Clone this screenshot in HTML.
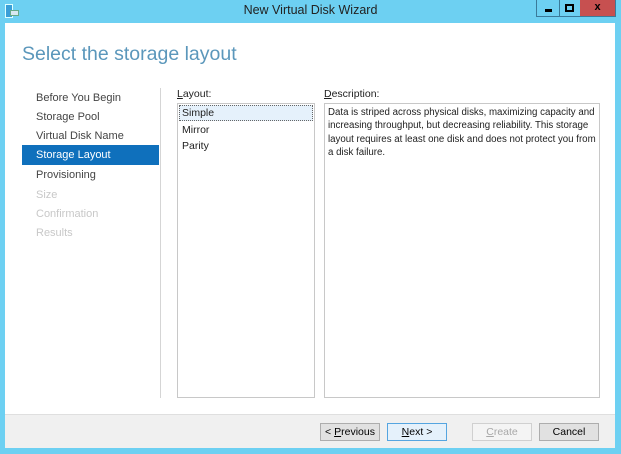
<!DOCTYPE html>
<html><head><style>
*{margin:0;padding:0;box-sizing:border-box}
body{width:621px;height:454px;background:#6dd0f2;font-family:"Liberation Sans",sans-serif;position:relative;overflow:hidden;font-size:11px;color:#1e1e1e}
.a{position:absolute}
.nav{left:36px;font-size:11px;color:#444}
.btn{position:absolute;top:423px;height:18px;border:1px solid #adadad;background:#e1e1e1;font-size:10.5px;text-align:center;line-height:16px;color:#000}
</style></head><body>
<div class="a" style="left:5px;top:4px;width:8px;height:14px;background:#3a9fd8;border:1px solid #dff"></div>
<div class="a" style="left:10px;top:10px;width:9px;height:6px;background:#d8e8f0;border:1px solid #6a8"></div>
<div class="a" style="left:0;top:3px;width:621px;text-align:center;font-size:12.5px;color:#222">New Virtual Disk Wizard</div>
<div class="a" style="left:536px;top:0;width:24px;height:17px;border:1px solid #3a7a9a;border-top:none"><div class="a" style="left:8px;top:9px;width:7px;height:3px;background:#000"></div></div>
<div class="a" style="left:559px;top:0;width:22px;height:17px;border:1px solid #3a7a9a;border-top:none;border-left:none"><div class="a" style="left:6px;top:4px;width:9px;height:8px;border:2px solid #000"></div></div>
<div class="a" style="left:580px;top:0;width:36px;height:17px;background:#c75050;border:1px solid #3a7a9a;border-top:none;border-left:none;color:#000;text-align:center;font-weight:bold;font-size:11px;line-height:15px">x</div>
<div class="a" style="left:5px;top:23px;width:610px;height:425px;background:#fff"></div>
<div class="a" style="left:5px;top:414px;width:610px;height:34px;background:#f0f0f0;border-top:1px solid #dfdfdf"></div>
<div class="a" style="left:22px;top:43px;font-size:19.5px;color:#5b97bb;font-weight:300">Select the storage layout</div>
<div class="a nav" style="top:92px">Before You Begin</div>
<div class="a nav" style="top:111px">Storage Pool</div>
<div class="a nav" style="top:130px">Virtual Disk Name</div>
<div class="a" style="left:22px;top:145px;width:137px;height:20px;background:#0f70bc"></div>
<div class="a nav" style="top:149px;color:#fff">Storage Layout</div>
<div class="a nav" style="top:169px">Provisioning</div>
<div class="a nav" style="top:189px;color:#c8c8c8">Size</div>
<div class="a nav" style="top:208px;color:#c8c8c8">Confirmation</div>
<div class="a nav" style="top:227px;color:#c8c8c8">Results</div>
<div class="a" style="left:160px;top:88px;width:1px;height:310px;background:#d5d5d5"></div>
<div class="a" style="left:177px;top:88px;font-size:10.5px"><u>L</u>ayout:</div>
<div class="a" style="left:177px;top:103px;width:138px;height:295px;border:1px solid #c8c8c8"></div>
<div class="a" style="left:179px;top:105px;width:134px;height:16px;background:#e5f1fb;border:1px dotted #666"></div>
<div class="a" style="left:182px;top:107px;font-size:10.5px">Simple</div>
<div class="a" style="left:182px;top:124px;font-size:10.5px">Mirror</div>
<div class="a" style="left:182px;top:140px;font-size:10.5px">Parity</div>
<div class="a" style="left:324px;top:88px;font-size:10.5px"><u>D</u>escription:</div>
<div class="a" style="left:324px;top:103px;width:276px;height:295px;border:1px solid #c8c8c8;padding:2px 3px;font-size:9.7px;line-height:13.3px">Data is striped across physical disks, maximizing capacity and increasing throughput, but decreasing reliability. This storage layout requires at least one disk and does not protect you from a disk failure.</div>
<div class="btn" style="left:320px;width:60px">&lt; <u>P</u>revious</div>
<div class="btn" style="left:387px;width:60px;border-color:#55a5e0;background:#e5f1fb"><u>N</u>ext &gt;</div>
<div class="btn" style="left:472px;width:60px;background:#f4f4f4;border-color:#d0d0d0;color:#a8a8a8"><u>C</u>reate</div>
<div class="btn" style="left:539px;width:60px">Cancel</div>
</body></html>
